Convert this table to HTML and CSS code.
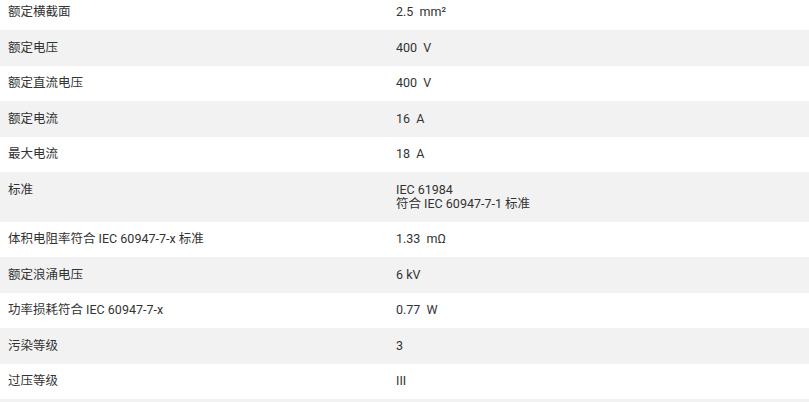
FILE: index.html
```html
<!DOCTYPE html>
<html lang="zh-CN">
<head>
<meta charset="utf-8">
<link rel="stylesheet" href="styles.css">
</head>
<body>
<div class="table">
  <div class="row"><div class="k">额定横截面</div><div class="v">2.5&nbsp; mm²</div></div>
  <div class="row alt"><div class="k">额定电压</div><div class="v">400&nbsp; V</div></div>
  <div class="row"><div class="k">额定直流电压</div><div class="v">400&nbsp; V</div></div>
  <div class="row alt"><div class="k">额定电流</div><div class="v">16&nbsp; A</div></div>
  <div class="row"><div class="k">最大电流</div><div class="v">18&nbsp; A</div></div>
  <div class="row alt"><div class="k">标准</div><div class="v">IEC 61984<br>符合 IEC 60947-7-1 标准</div></div>
  <div class="row"><div class="k">体积电阻率符合 IEC 60947-7-x 标准</div><div class="v">1.33&nbsp; mΩ</div></div>
  <div class="row alt"><div class="k">额定浪涌电压</div><div class="v">6 kV</div></div>
  <div class="row"><div class="k">功率损耗符合 IEC 60947-7-x</div><div class="v">0.77&nbsp; W</div></div>
  <div class="row alt"><div class="k">污染等级</div><div class="v">3</div></div>
  <div class="row"><div class="k">过压等级</div><div class="v">III</div></div>
  <div class="row alt"><div class="k">&nbsp;</div><div class="v">&nbsp;</div></div>
</div>
</body>
</html>
```

FILE: styles.css
```css
html, body {
  margin: 0;
  padding: 0;
  background: #fff;
}
body {
  font-family: Roboto, "Noto Sans CJK SC", sans-serif;
  font-size: 12.5px;
  color: #333;
  overflow: hidden;
}
.table {
  margin-top: -5.5px;
}
.row {
  display: grid;
  grid-template-columns: 388px 1fr;
  background: #fff;
}
.row.alt {
  background: #f2f2f2;
}
.k, .v {
  padding: 10.75px 8px;
  line-height: 14px;
}
```
